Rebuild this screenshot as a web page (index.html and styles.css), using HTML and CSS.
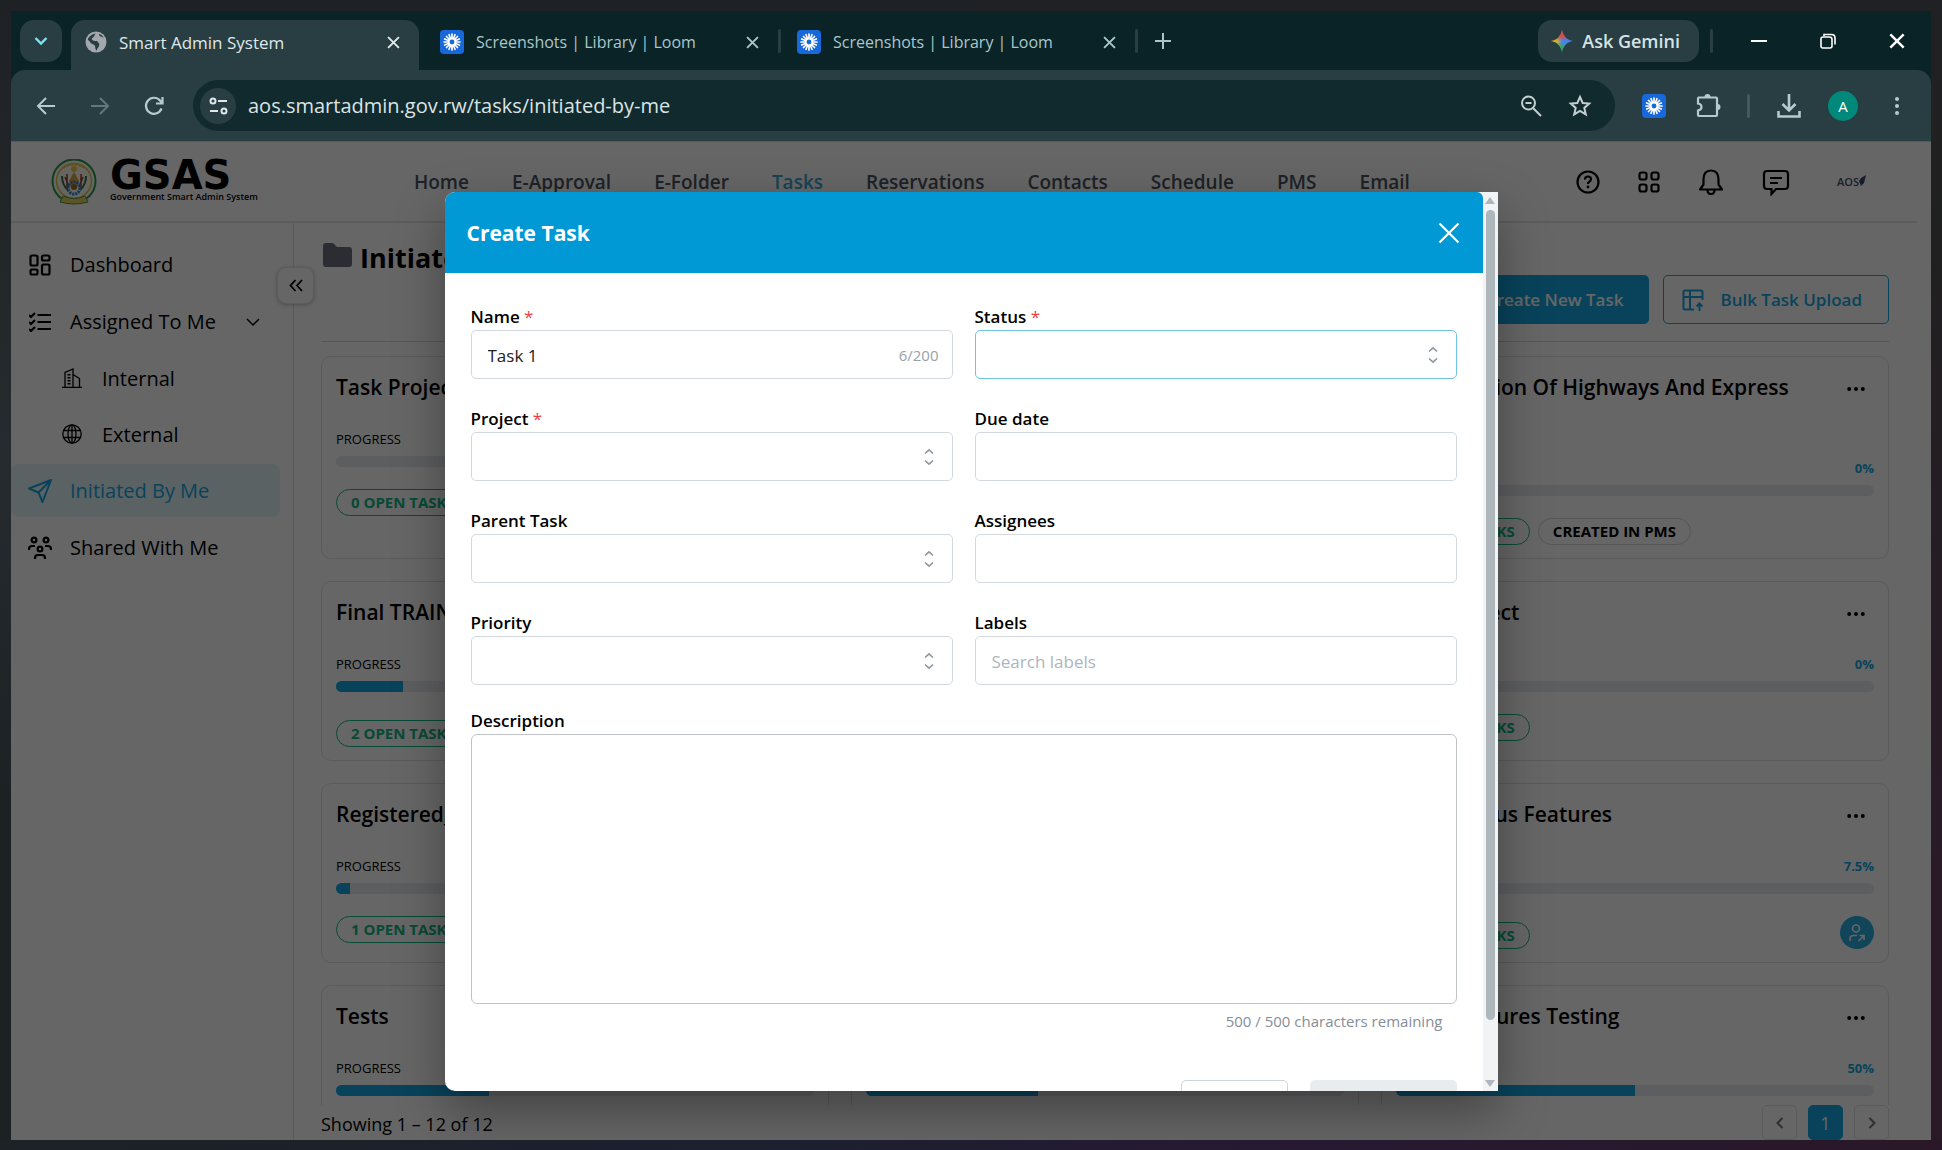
FILE: index.html
```html
<!DOCTYPE html>
<html lang="en">
<head>
    <meta charset="UTF-8">
    <meta name="viewport" content="width=device-width, initial-scale=1.0">
    <title>Smart Admin System</title>
    <link rel="stylesheet" href="styles.css">
</head>
<body>
    <!-- shared icons -->
    <svg class="sprite" aria-hidden="true">
        <symbol id="loom" viewBox="0 0 24 24">
            <rect width="24" height="24" rx="4" fill="#1868db"/>
            <path d="M12 4v16M4 12h16M6.500 6.500l11 11M17.500 6.500l-11 11M9 4.700l6 14.600M15 4.700L9 19.300M4.700 9l14.600 6M4.700 15l14.600-6" stroke="#fff" stroke-width="1.700" stroke-linecap="round"/>
            <circle cx="12" cy="12" r="3.300" fill="#1868db" stroke="#fff" stroke-width="1.700"/>
        </symbol>
        <symbol id="close" viewBox="0 0 12 12">
            <path d="M1 1l10 10M11 1L1 11" fill="none" stroke="currentColor" stroke-width="1.800"/>
        </symbol>
        <symbol id="updown" viewBox="0 0 12 18">
            <path d="M2 5.500L6 1.800 10 5.500M2 12.500L6 16.200 10 12.500" fill="none" stroke="currentColor" stroke-width="1.600"/>
        </symbol>
        <symbol id="dots" viewBox="0 0 18 6">
            <circle cx="2.200" cy="3" r="2"/><circle cx="9" cy="3" r="2"/><circle cx="15.800" cy="3" r="2"/>
        </symbol>
    </svg>

    <div class="window">
        <div class="tab-strip">
            <button class="tab-search" aria-label="Search tabs">
                <svg width="14" height="10" viewBox="0 0 14 10"><path d="M1.500 2L7 7.500 12.500 2" fill="none" stroke="#7fe3f2" stroke-width="2.400"/></svg>
            </button>
            <div class="tab active">
                <svg width="22" height="22" viewBox="0 0 22 22">
                    <circle cx="11" cy="11" r="10.500" fill="#a3a8af"/>
                    <path d="M11 2.500c-2 1-1 2.500-2.500 3.500S6 8.500 8 9.500s4-.5 5 1.500 2 1.500 1 4-2 2-2 4.500c-2-.5-1.500-3-2-4.500s-4-2-5-4S2.500 9.500 3 8 7 2.500 11 2.500zM14 3c0 2 1 2.500 3 3s2 2 2.500 3.500C19 6.500 17 3.500 14 3z" fill="#283e42"/>
                </svg>
                <span class="tab-title">Smart Admin System</span>
                <button class="tab-close" aria-label="Close tab"><svg width="13" height="13"><use href="#close"/></svg></button>
            </div>
            <div class="tab">
                <svg width="24" height="24"><use href="#loom"/></svg>
                <span class="tab-title">Screenshots | Library | Loom</span>
                <button class="tab-close" aria-label="Close tab"><svg width="13" height="13"><use href="#close"/></svg></button>
            </div>
            <span class="divider"></span>
            <div class="tab">
                <svg width="24" height="24"><use href="#loom"/></svg>
                <span class="tab-title">Screenshots | Library | Loom</span>
                <button class="tab-close" aria-label="Close tab"><svg width="13" height="13"><use href="#close"/></svg></button>
            </div>
            <span class="divider"></span>
            <button class="new-tab" aria-label="New tab">
                <svg width="16" height="16" viewBox="0 0 16 16"><path d="M8 0v16M0 8h16" stroke="currentColor" stroke-width="2"/></svg>
            </button>
            <button class="gemini">
                <svg width="22" height="22" viewBox="0 0 22 22">
                    <defs>
                        <linearGradient id="gem" x1="0" y1="0" x2="1" y2="0">
                            <stop offset="0" stop-color="#fbbc04"/><stop offset=".3" stop-color="#c5b03a"/><stop offset=".5" stop-color="#4285f4"/><stop offset="1" stop-color="#3b82f6"/>
                        </linearGradient>
                        <linearGradient id="gemTop" x1="0" y1="0" x2="0" y2="1">
                            <stop offset="0" stop-color="#ea4335"/><stop offset=".25" stop-color="#ea4335"/><stop offset=".5" stop-color="#ea4335" stop-opacity="0"/><stop offset=".55" stop-color="#34a853" stop-opacity="0"/><stop offset=".8" stop-color="#34a853"/>
                        </linearGradient>
                    </defs>
                    <path d="M11 0c1 6 5 10 11 11-6 1-10 5-11 11C10 16 6 12 0 11 6 10 10 6 11 0z" fill="url(#gem)"/>
                    <path d="M11 0c1 6 5 10 11 11-6 1-10 5-11 11C10 16 6 12 0 11 6 10 10 6 11 0z" fill="url(#gemTop)"/>
                </svg>
                Ask Gemini
            </button>
            <span class="divider"></span>
            <div class="window-buttons">
                <button aria-label="Minimize"><svg width="16" height="16" viewBox="0 0 16 16"><path d="M0 8h16" stroke="currentColor" stroke-width="2"/></svg></button>
                <button aria-label="Restore"><svg width="16" height="16" viewBox="0 0 16 16"><path d="M4 3V1.500h7.500q3.500 0 3.500 3.500v6.500M3 4h6.500q2.500 0 2.500 2.500V13q0 2-2 2H3q-2 0-2-2V6q0-2 2-2z" fill="none" stroke="currentColor" stroke-width="1.600"/></svg></button>
                <button aria-label="Close"><svg width="16" height="16"><use href="#close"/></svg></button>
            </div>
        </div>

        <div class="toolbar">
            <button class="tool" aria-label="Back"><svg width="20" height="20" viewBox="0 0 20 20"><path d="M19 10H2M10 2l-8 8 8 8" fill="none" stroke="currentColor" stroke-width="2"/></svg></button>
            <button class="tool dim" aria-label="Forward"><svg width="20" height="20" viewBox="0 0 20 20"><path d="M1 10h17M10 2l8 8-8 8" fill="none" stroke="currentColor" stroke-width="2"/></svg></button>
            <button class="tool" aria-label="Reload"><svg width="20" height="20" viewBox="0 0 20 20"><path d="M17.500 12.500A8 8 0 1 1 16 4.500l2 2.500M18.500 1v6.500H12" fill="none" stroke="currentColor" stroke-width="2.200"/></svg></button>
            <div class="omnibox">
                <button class="site-info" aria-label="Site information">
                    <svg width="19" height="18" viewBox="0 0 19 18"><g fill="none" stroke="currentColor" stroke-width="2"><circle cx="4" cy="4" r="2.500"/><path d="M9 4h9M1 14h8"/><circle cx="15" cy="14" r="2.500"/></g></svg>
                </button>
                <input class="url" type="text" value="aos.smartadmin.gov.rw/tasks/initiated-by-me" aria-label="Address">
                <svg width="22" height="22" viewBox="0 0 22 22"><g fill="none" stroke="currentColor" stroke-width="2"><circle cx="8.500" cy="8" r="6.500"/><path d="M13 13l8 8M5.500 8h6"/></g></svg>
                <svg width="24" height="24" viewBox="0 0 24 24"><path d="M12 3l2.700 6 6.500.6-4.900 4.300 1.500 6.500L12 17l-5.800 3.400 1.500-6.500-4.900-4.300 6.500-.6z" fill="none" stroke="currentColor" stroke-width="2"/></svg>
            </div>
            <button class="tool" aria-label="Loom"><svg width="24" height="24"><use href="#loom"/></svg></button>
            <button class="tool" aria-label="Extensions"><svg width="26" height="26" viewBox="0 0 26 26"><path d="M3 4.500h18q1 0 1 1V22q0 1-1 1H4q-1 0-1-1v-4.500q3.500-.5 3.500-3.500T3 10.500V5.500q0-1 1-1z" fill="none" stroke="currentColor" stroke-width="2.200"/><path d="M9.500 4a3 3 0 0 1 6 0zM22.500 11a3 3 0 0 1 0 6z" fill="currentColor"/></svg></button>
            <span class="divider"></span>
            <button class="tool" aria-label="Downloads"><svg width="24" height="24" viewBox="0 0 24 24"><path d="M12 0v16M5.500 10l6.500 6.500 6.500-6.500M1.500 17v5.500h21V17" fill="none" stroke="currentColor" stroke-width="2.600"/></svg></button>
            <button class="tool" aria-label="Profile"><span class="profile">A</span></button>
            <button class="tool" aria-label="Menu"><svg width="6" height="20" viewBox="0 0 6 20"><g fill="currentColor"><circle cx="3" cy="3" r="2"/><circle cx="3" cy="10" r="2"/><circle cx="3" cy="17" r="2"/></g></svg></button>
        </div>

        <div class="page">
            <header class="site-header">
                <div class="brand">
                    <svg width="46" height="46" viewBox="0 0 46 46">
                        <circle cx="23" cy="22" r="21.500" fill="none" stroke="#2f9a4c" stroke-width="2"/>
                        <circle cx="23" cy="22" r="17.500" fill="#fdfcf3" stroke="#e8c24a" stroke-width="1.500"/>
                        <path d="M12 9q11-7 22 0" fill="none" stroke="#e8c24a" stroke-width="2" stroke-dasharray="3 1"/>
                        <circle cx="23" cy="10" r="3" fill="#f5ce42"/>
                        <path d="M23 13l5 9-2 7h-6l-2-7z" fill="#e2a63b"/>
                        <path d="M16 15v15M14 18l4 10M30 15v15M32 18l-4 10" stroke="#a43c2c" stroke-width="1.500"/>
                        <path d="M11 17q0 9 6 14M35 17q0 9-6 14" fill="none" stroke="#37704a" stroke-width="2"/>
                        <circle cx="23" cy="29" r="6" fill="none" stroke="#2e86d8" stroke-width="3" stroke-dasharray="2 1"/>
                        <circle cx="23" cy="28" r="3" fill="#9a6b2e"/>
                        <path d="M12 37q11 5 22 0l3 6q-14 4-28 0z" fill="#e6d15a" stroke="#4d9a4a"/>
                    </svg>
                    <div class="brand-text">
                        <span class="brand-name">GSAS</span>
                        <span class="brand-sub">Government Smart Admin System</span>
                    </div>
                </div>
                <nav class="main-nav">
                    <a href="#">Home</a>
                    <a href="#">E-Approval</a>
                    <a href="#">E-Folder</a>
                    <a href="#" class="current">Tasks</a>
                    <a href="#">Reservations</a>
                    <a href="#">Contacts</a>
                    <a href="#">Schedule</a>
                    <a href="#">PMS</a>
                    <a href="#">Email</a>
                </nav>
                <div class="header-icons">
                    <button aria-label="Help"><svg width="24" height="24" viewBox="0 0 24 24"><g fill="none" stroke="#000" stroke-width="2.200"><circle cx="12" cy="12" r="10.500"/><path d="M9 9.500q0-3 3-3t3 2.800q0 1.700-2 2.700-1 .6-1 2"/></g><circle cx="12" cy="17" r="1.400"/></svg></button>
                    <button aria-label="Apps"><svg width="22" height="22" viewBox="0 0 22 22"><g fill="none" stroke="#000" stroke-width="2.200"><rect x="1.500" y="1.500" width="7" height="7" rx="2"/><rect x="13.500" y="1.500" width="7" height="7" rx="2"/><rect x="1.500" y="13.500" width="7" height="7" rx="2"/><rect x="13.500" y="13.500" width="7" height="7" rx="2"/></g></svg></button>
                    <button aria-label="Notifications"><svg width="26" height="28" viewBox="0 0 26 28"><path d="M13 2.500q7.500 0 7.500 9v5l3.500 5H2l3.500-5v-5q0-9 7.500-9zM9.500 22q0 4 3.500 4t3.500-4" fill="none" stroke="#000" stroke-width="2.200" stroke-linejoin="round"/></svg></button>
                    <button aria-label="Messages"><svg width="28" height="28" viewBox="0 0 28 28"><path d="M5 3h18q3 0 3 3v12q0 3-3 3H14l-4.500 5v-5H5q-3 0-3-3V6q0-3 3-3zM8 10h12M8 15h8" fill="none" stroke="#000" stroke-width="2.200"/></svg></button>
                    <button class="org-logo" aria-label="Account">AOS<svg width="8" height="16" viewBox="0 0 8 16"><path d="M0 7l2-3 5-3-2 8-3 3" fill="#3a4470"/></svg></button>
                </div>
            </header>

            <div class="content">
                <aside class="sidebar">
                    <a href="#" class="side-link">
                        <svg width="22" height="22" viewBox="0 0 22 22"><g fill="none" stroke="currentColor" stroke-width="2.200"><rect x="1.500" y="1.500" width="7" height="10" rx="1.500"/><rect x="13" y="1.500" width="7.500" height="5" rx="1.500"/><rect x="1.500" y="15.500" width="7" height="5" rx="1.500"/><rect x="13" y="10.500" width="7.500" height="10" rx="1.500"/></g></svg>
                        Dashboard
                    </a>
                    <a href="#" class="side-link">
                        <svg width="22" height="20" viewBox="0 0 22 20"><path d="M8.500 3H22M8.500 10H22M8.500 17H22M0 3l2 2 4-4M0 10l2 2 4-4M0 17l2 2 4-4" fill="none" stroke="currentColor" stroke-width="2.200"/></svg>
                        Assigned To Me
                        <svg class="caret" width="14" height="10" viewBox="0 0 14 10"><path d="M1 2l6 6 6-6" fill="none" stroke="currentColor" stroke-width="1.500"/></svg>
                    </a>
                    <a href="#" class="side-link sub">
                        <svg width="20" height="20" viewBox="0 0 20 20"><g fill="none" stroke="currentColor" stroke-width="1.300"><path d="M0 19.300h20M3 19V4.500L11 1v18M11 6.500l6.500 4V19"/><path d="M7 6v11" stroke-width="3" stroke-dasharray="1.500 1.500"/></g></svg>
                        Internal
                    </a>
                    <a href="#" class="side-link sub">
                        <svg width="20" height="20" viewBox="0 0 20 20"><g fill="none" stroke="currentColor" stroke-width="1.300"><circle cx="10" cy="10" r="9.200"/><ellipse cx="10" cy="10" rx="4" ry="9.200"/><path d="M10 1v18M2 6.500h16M2 13.500h16"/></g></svg>
                        External
                    </a>
                    <a href="#" class="side-link current">
                        <svg width="24" height="24" viewBox="0 0 24 24"><path d="M23 1L1 9.500l9.500 4L14.500 23zM23 1L10.500 13.500" fill="none" stroke="currentColor" stroke-width="2" stroke-linejoin="round"/></svg>
                        Initiated By Me
                    </a>
                    <a href="#" class="side-link">
                        <svg width="24" height="24" viewBox="0 0 24 24"><g fill="none" stroke="currentColor" stroke-width="2.200"><circle cx="6" cy="4" r="2.400"/><circle cx="18" cy="4" r="2.400"/><circle cx="12" cy="13" r="2.400"/><path d="M1 14v-1q0-3 3-3h3M23 14v-1q0-3-3-3h-3M7 23v-1q0-3 3-3h4q3 0 3 3v1"/></g></svg>
                        Shared With Me
                    </a>
                    <button class="collapse" aria-label="Collapse sidebar">
                        <svg width="14" height="13" viewBox="0 0 14 13"><path d="M6.500 1L1.500 6.500l5 5.500M13 1L8 6.500l5 5.500" fill="none" stroke="#000" stroke-width="1.800"/></svg>
                    </button>
                </aside>

                <main class="tasks">
                    <div class="tasks-head">
                        <h1>
                            <svg width="29" height="28" viewBox="0 0 29 28"><path d="M3 0h7l4 4h12q3 0 3 3v14q0 3-3 3H3q-3 0-3-3V3q0-3 3-3z" fill="#6b7280"/></svg>
                            Initiated By Me
                        </h1>
                        <div class="actions">
                            <button class="btn btn-primary">Create New Task</button>
                            <button class="btn btn-outline">
                                <svg width="22" height="22" viewBox="0 0 22 22"><path d="M12 20.500H3q-1.500 0-1.500-1.500V3Q1.500 1.500 3 1.500h16q1.500 0 1.500 1.500v8M1.500 8h19M8 1.500v19M17.500 22v-7M14.500 17.500l3-3 3 3" fill="none" stroke="currentColor" stroke-width="2"/></svg>
                                Bulk Task Upload
                            </button>
                        </div>
                    </div>

                    <div class="card-grid" id="cardGrid"></div>

                    <div class="tasks-foot">
                        <span>Showing 1 – 12 of 12</span>
                        <div class="pager">
                            <button aria-label="Previous page"><svg width="8" height="12" viewBox="0 0 8 12"><path d="M6.500 1L1.500 6l5 5" fill="none" stroke="currentColor" stroke-width="2"/></svg></button>
                            <button class="current">1</button>
                            <button aria-label="Next page"><svg width="8" height="12" viewBox="0 0 8 12"><path d="M1.500 1l5 5-5 5" fill="none" stroke="currentColor" stroke-width="2"/></svg></button>
                        </div>
                    </div>
                </main>
            </div>

            <div class="overlay">
                <div class="modal" role="dialog" aria-labelledby="modalTitle">
                    <div class="modal-main">
                        <div class="modal-head">
                            <h2 id="modalTitle">Create Task</h2>
                            <button class="modal-close" aria-label="Close"><svg width="22" height="22" viewBox="0 0 22 22"><path d="M1.500 1.500l19 19M20.500 1.500l-19 19" fill="none" stroke="currentColor" stroke-width="2.200"/></svg></button>
                        </div>
                        <form class="task-form">
                            <div class="form-grid">
                                <div class="field">
                                    <label for="name">Name <span class="req">*</span></label>
                                    <div class="control">
                                        <input type="text" id="name" value="Task 1">
                                        <span class="hint">6/200</span>
                                    </div>
                                </div>
                                <div class="field">
                                    <label for="status">Status <span class="req">*</span></label>
                                    <div class="control">
                                        <select id="status" class="focused"><option></option></select>
                                        <svg class="updown" width="12" height="18"><use href="#updown"/></svg>
                                    </div>
                                </div>
                                <div class="field">
                                    <label for="project">Project <span class="req">*</span></label>
                                    <div class="control">
                                        <select id="project"><option></option></select>
                                        <svg class="updown" width="12" height="18"><use href="#updown"/></svg>
                                    </div>
                                </div>
                                <div class="field">
                                    <label for="dueDate">Due date</label>
                                    <div class="control"><input type="text" id="dueDate"></div>
                                </div>
                                <div class="field">
                                    <label for="parentTask">Parent Task</label>
                                    <div class="control">
                                        <select id="parentTask"><option></option></select>
                                        <svg class="updown" width="12" height="18"><use href="#updown"/></svg>
                                    </div>
                                </div>
                                <div class="field">
                                    <label for="assignees">Assignees</label>
                                    <div class="control"><input type="text" id="assignees"></div>
                                </div>
                                <div class="field">
                                    <label for="priority">Priority</label>
                                    <div class="control">
                                        <select id="priority"><option></option></select>
                                        <svg class="updown" width="12" height="18"><use href="#updown"/></svg>
                                    </div>
                                </div>
                                <div class="field">
                                    <label for="labels">Labels</label>
                                    <div class="control"><input type="text" id="labels" placeholder="Search labels"></div>
                                </div>
                            </div>
                            <div class="field description">
                                <label for="description">Description</label>
                                <textarea id="description"></textarea>
                                <span class="counter">500 / 500 characters remaining</span>
                            </div>
                            <div class="form-actions">
                                <button type="button" class="cancel" aria-label="Cancel"></button>
                                <button type="submit" class="submit" aria-label="Create Task" disabled></button>
                            </div>
                        </form>
                    </div>
                    <div class="scrollbar">
                        <svg width="10" height="7" viewBox="0 0 10 7"><path d="M5 0l5 7H0z" fill="#aeb7bc"/></svg>
                        <div class="thumb"></div>
                        <svg width="10" height="7" viewBox="0 0 10 7"><path d="M5 7l5-7H0z" fill="#aeb7bc"/></svg>
                    </div>
                </div>
            </div>
        </div>
    </div>

    <script src="script.js"></script>
</body>
</html>
```
FILE: styles.css
```css
* {
    box-sizing: border-box;
}
body {
    margin: 0;
    height: 100vh;
    padding: 11px 11px 10px;
    font-family: "Open Sans", "Noto Sans", sans-serif;
    font-size: 17px;
    color: #000;
    background:
        linear-gradient(to right, #1c2226, #1c2030 40%, #261932 65%, #2a1828) bottom / 100% 11px no-repeat,
        linear-gradient(to bottom, #202124, #202020 20%, #2a1a28 75%) right / 50% 100% no-repeat,
        linear-gradient(to bottom, #1f2224, #252b2e 40%, #1c2124 70%);
}
button {
    font-family: inherit;
    border: none;
    background: none;
    padding: 0;
    color: inherit;
    cursor: pointer;
}
a {
    color: inherit;
    text-decoration: none;
}
svg {
    display: block;
    flex: none;
}
.sprite {
    position: absolute;
    width: 0;
    height: 0;
}
.window {
    height: 100%;
    display: flex;
    flex-direction: column;
    overflow: hidden;
    background: #0a2327;
}

/* browser tabs */
.tab-strip {
    display: flex;
    align-items: center;
    height: 59px;
    padding-left: 9px;
    color: #a9c7cb;
}
.tab-search {
    width: 42px;
    height: 42px;
    border-radius: 14px;
    background: #283e42;
    display: flex;
    align-items: center;
    justify-content: center;
    margin-right: 9px;
}
.tab {
    width: 352px;
    height: 50px;
    display: flex;
    align-items: center;
    gap: 12px;
    padding: 0 17px 6px 14px;
    align-self: flex-end;
    font-size: 16px;
}
.tab + .tab {
    margin-left: 7px;
}
.divider + .tab {
    margin-left: 2px;
}
.tab.active {
    width: 348px;
    background: #283e42;
    border-radius: 14px 14px 0 0;
    color: #dfe9ea;
    font-size: 17px;
}
.tab-title {
    flex: 1;
    white-space: nowrap;
}
.tab-close {
    padding: 2px;
}
.divider {
    width: 3px;
    height: 24px;
    border-radius: 2px;
    background: #283e42;
}
.new-tab {
    margin-left: 17px;
}
.gemini {
    margin: 0 11px 0 auto;
    height: 42px;
    display: flex;
    align-items: center;
    gap: 9px;
    padding: 0 19px 0 13px;
    border-radius: 14px;
    background: #283e42;
    color: #d5e3e5;
    font-size: 18px;
    font-weight: 600;
}
.window-buttons {
    display: flex;
    padding-left: 11px;
    color: #fff;
}
.window-buttons button {
    width: 69px;
    height: 42px;
    display: flex;
    align-items: center;
    justify-content: center;
}

/* address bar */
.toolbar {
    display: flex;
    align-items: center;
    height: 72px;
    padding: 0 7px 0 8px;
    background: #283e42;
    border-bottom: 1px solid #4a5f63;
    border-radius: 14px 14px 0 0;
    color: #b4cccf;
}
.tool {
    width: 54px;
    height: 54px;
    display: flex;
    align-items: center;
    justify-content: center;
}
.tool.dim {
    color: #63777b;
}
.omnibox {
    flex: 1;
    height: 51px;
    margin: 0 12px;
    padding: 0 23px 0 7px;
    border-radius: 26px;
    background: #112a2e;
    display: flex;
    align-items: center;
    gap: 26px;
    color: #c3cfd0;
}
.site-info {
    width: 36px;
    height: 36px;
    border-radius: 50%;
    background: #283e42;
    color: #dfe9ea;
    display: flex;
    align-items: center;
    justify-content: center;
    margin-right: -14px;
}
.url {
    flex: 1;
    border: none;
    background: none;
    outline: none;
    padding: 0;
    color: #dbe4e5;
    font-family: inherit;
    font-size: 20px;
}
.toolbar .divider {
    margin: 0 12px;
    background: #44595d;
}
.profile {
    width: 30px;
    height: 30px;
    border-radius: 50%;
    background: #00897b;
    color: #fff;
    font-size: 15px;
    line-height: 30px;
    text-align: center;
}

/* page */
.page {
    flex: 1;
    min-height: 0;
    position: relative;
    display: flex;
    flex-direction: column;
    background: #fff;
}
.site-header {
    display: flex;
    align-items: center;
    height: 81px;
    margin-right: 14px;
    padding: 0 40px;
    border-bottom: 2px solid #e6e6e6;
}
.brand {
    display: flex;
    align-items: center;
    gap: 13px;
    width: 363px;
}
.brand-text {
    display: flex;
    flex-direction: column;
}
.brand-name {
    font-family: "DejaVu Sans", sans-serif;
    font-size: 40px;
    font-weight: bold;
    line-height: 30px;
}
.brand-sub {
    font-size: 9px;
    font-weight: 600;
    line-height: 14px;
}
.main-nav {
    display: flex;
    gap: 43px;
    font-weight: 600;
    font-size: 19px;
    color: #4b5563;
}
.main-nav .current {
    color: #3aa9d6;
}
.header-icons {
    margin-left: auto;
    display: flex;
    align-items: center;
    gap: 38px;
}
.org-logo {
    display: flex;
    align-items: center;
    font-size: 11px;
    font-weight: 600;
    color: #4a4f6e;
    margin: 0 10px 0 9px;
}
.content {
    flex: 1;
    min-height: 0;
    display: flex;
}
.sidebar {
    position: relative;
    width: 283px;
    padding: 15px 13px 0 0;
    border-right: 1px solid #dcdfe2;
    display: flex;
    flex-direction: column;
    gap: 4px;
}
.side-link {
    display: grid;
    grid-template-columns: 24px 1fr auto;
    align-items: center;
    gap: 18px;
    height: 53px;
    padding: 0 20px 0 17px;
    border-radius: 8px;
    font-size: 20px;
    font-weight: 500;
}
.side-link svg {
    justify-self: center;
}
.side-link.sub {
    height: 52px;
    padding-left: 49px;
}
.side-link.current {
    background: #e0f4fb;
    color: #15a8e4;
}
.collapse {
    position: absolute;
    top: 44px;
    right: -21px;
    width: 37px;
    height: 37px;
    border-radius: 9px;
    border: 1px solid #e3e5e8;
    background: #fff;
    box-shadow: 0 1px 4px rgba(0,0,0,0.25);
    display: flex;
    align-items: center;
    justify-content: center;
}
.tasks {
    flex: 1;
    min-width: 0;
    padding: 16px 42px 0 27px;
    display: flex;
    flex-direction: column;
}
.tasks-head {
    padding-bottom: 17px;
    border-bottom: 1px solid #d4d7db;
    margin-bottom: 14px;
}
h1 {
    margin: 0;
    display: flex;
    align-items: center;
    gap: 8px;
    padding-left: 2px;
    height: 36px;
    font-size: 27px;
    font-weight: 700;
}
.actions {
    display: flex;
    justify-content: flex-end;
    gap: 14px;
}
.btn {
    height: 49px;
    border-radius: 5px;
    font-size: 17px;
    font-weight: 600;
    display: flex;
    align-items: center;
    gap: 16px;
    padding: 0 26px 0 18px;
}
.btn-primary {
    background: #15a8e4;
    color: #fff;
    padding-left: 50px;
}
.btn-outline {
    border: 1px solid #15a8e4;
    color: #15a8e4;
}
.card-grid {
    flex: 1;
    min-height: 0;
    overflow: hidden;
    display: grid;
    grid-template-columns: repeat(3, 1fr);
    grid-auto-rows: max-content;
    gap: 22px;
}
.card {
    border: 1px solid #e0e2e5;
    border-radius: 10px;
    padding: 15px 14px 13px;
}
.card-title {
    display: flex;
    justify-content: space-between;
    min-height: 31px;
    font-size: 21px;
    font-weight: 600;
    line-height: 30px;
}
.card-title svg {
    margin: 14px 9px 0 24px;
}
.card-meta {
    display: flex;
    justify-content: space-between;
    margin-top: 26px;
    font-size: 13px;
    line-height: 20px;
    font-weight: 500;
}
.card-meta b {
    color: #15a8e4;
    font-weight: 700;
}
.bar {
    height: 11px;
    margin-top: 7px;
    border-radius: 6px;
    background: #e9ecef;
    overflow: hidden;
}
.bar-fill {
    height: 100%;
    background: #15a8e4;
}
.card-foot {
    display: flex;
    align-items: flex-end;
    gap: 8px;
    min-height: 27px;
    margin-top: 22px;
}
.card-foot.tall {
    height: 33px;
}
.pill {
    height: 27px;
    padding: 0 14px;
    border: 1px solid #12b886;
    border-radius: 14px;
    color: #12b886;
    font-size: 15px;
    font-weight: 700;
    line-height: 25px;
}
.pill.plain {
    border-color: #d3d6da;
    color: #000;
}
.shared {
    margin-left: auto;
    width: 34px;
    height: 33px;
    border-radius: 50%;
    background: #2bacdf;
    display: flex;
    align-items: center;
    justify-content: center;
}
.tasks-foot {
    display: flex;
    justify-content: space-between;
    height: 35px;
    font-size: 18px;
    line-height: 38px;
}
.pager {
    display: flex;
    gap: 11px;
}
.pager button {
    width: 35px;
    height: 35px;
    border: 1px solid #e0e2e5;
    border-radius: 5px;
    color: #777;
    display: flex;
    align-items: center;
    justify-content: center;
    font-size: 18px;
}
.pager .current {
    background: #15a8e4;
    border-color: #15a8e4;
    color: #fff;
}

/* create task modal */
.overlay {
    position: absolute;
    inset: 0;
    padding: 50px 0 49px;
    background: rgba(0,0,0,0.6);
    display: flex;
    justify-content: center;
}
.modal {
    width: 55%;
    max-width: 1053px;
    display: flex;
    background: #fff;
    border-radius: 10px 0 0 10px;
    overflow: hidden;
    box-shadow: 0 20px 50px rgba(0,0,0,0.35);
}
.modal-main {
    flex: 1;
    overflow: hidden;
}
.modal-head {
    display: flex;
    align-items: center;
    justify-content: space-between;
    height: 81px;
    padding: 0 23px 0 22px;
    background: #0098d5;
    border-radius: 0 6px 0 0;
    color: #fff;
}
h2 {
    margin: 0;
    font-size: 21px;
    font-weight: 700;
}
.task-form {
    padding: 31px 26px 0;
}
.form-grid {
    display: grid;
    grid-template-columns: 1fr 1fr;
    gap: 27px 22px;
}
.field {
    display: flex;
    flex-direction: column;
}
.field label {
    font-size: 17px;
    font-weight: 600;
    line-height: 26px;
}
.req {
    color: #f03e3e;
    font-weight: 400;
}
.control {
    position: relative;
}
.control input, .control select {
    display: block;
    width: 100%;
    height: 49px;
    padding: 1px 16px 0;
    border: 1px solid #d3d9df;
    border-radius: 5px;
    background: #fff;
    font-family: inherit;
    font-size: 17px;
    color: #222;
    outline: none;
    appearance: none;
}
.control input::placeholder {
    color: #adb5bd;
}
.control select.focused {
    border-color: #6fc3e8;
}
.hint {
    position: absolute;
    right: 14px;
    top: 13px;
    font-size: 15px;
    line-height: 24px;
    color: #99a1a9;
}
.updown {
    position: absolute;
    right: 18px;
    top: 16px;
    color: #8f979e;
}
.description {
    margin-top: 23px;
}
textarea {
    height: 270px;
    border: 1px solid #c0c4c8;
    border-radius: 6px;
    resize: none;
    font-family: inherit;
    font-size: 17px;
    padding: 12px 16px;
}
.counter {
    align-self: flex-end;
    margin: 5px 14px 0 0;
    font-size: 15px;
    line-height: 24px;
    color: #868e96;
}
.form-actions {
    display: flex;
    justify-content: flex-end;
    gap: 22px;
    margin-top: 47px;
}
.form-actions button {
    height: 49px;
    border-radius: 5px;
}
.cancel {
    width: 107px;
    border: 1px solid #ced4da;
}
.submit {
    width: 147px;
    background: #e9ecef;
}
.scrollbar {
    width: 15px;
    background: #f1f3f5;
    display: flex;
    flex-direction: column;
    align-items: center;
    padding: 5px 0 4px;
}
.thumb {
    width: 9px;
    flex: 0 0 91%;
    margin: 6px 0 auto;
    border-radius: 5px;
    background: #aeb7bc;
}
```
FILE: script.js
```js
// task cards, three per row
const tasks = [
    { title: 'Task Project', progress: 0, open: '0 OPEN TASKS' },
    { title: 'Website Redesign', progress: 0, open: '0 OPEN TASKS' },
    { title: 'Construction Of Highways And Express Ways', progress: 0, open: '0 OPEN TASKS', pms: true },
    { title: 'Final TRAINING', progress: 14, open: '2 OPEN TASKS', tall: true },
    { title: 'Onboarding', progress: 0, open: '0 OPEN TASKS' },
    { title: 'Task Project', progress: 0, open: '0 OPEN TASKS' },
    { title: 'Registered_Users', progress: 3, open: '1 OPEN TASKS' },
    { title: 'Reports', progress: 0, open: '0 OPEN TASKS' },
    { title: 'Tests Status Features', progress: 7.5, open: '1 OPEN TASKS', tall: true, shared: true },
    { title: 'Tests', progress: 32, open: '1 OPEN TASKS' },
    { title: 'Planning', progress: 36, open: '1 OPEN TASKS' },
    { title: 'Main Features Testing', progress: 50, open: '1 OPEN TASKS' }
];

document.getElementById('cardGrid').innerHTML = tasks.map(t => `
    <article class="card">
        <div class="card-title">
            <span>${t.title}</span>
            <svg width="18" height="6"><use href="#dots"/></svg>
        </div>
        <div class="card-meta"><span>PROGRESS</span><b>${t.progress}%</b></div>
        <div class="bar"><div class="bar-fill" style="width: ${t.progress}%"></div></div>
        <div class="card-foot ${t.tall ? 'tall' : ''}">
            <span class="pill">${t.open}</span>
            ${t.pms ? '<span class="pill plain">CREATED IN PMS</span>' : ''}
            ${t.shared ? '<span class="shared"><svg width="16" height="18" viewBox="0 0 16 18"><g fill="none" stroke="#fff" stroke-width="1.600"><circle cx="7" cy="4.500" r="3.500"/><path d="M1 17v-2q0-3.500 3.500-3.500H8M9.500 17l5-5M10.500 11.500H15V16"/></g></svg></span>' : ''}
        </div>
    </article>
`).join('');
```
